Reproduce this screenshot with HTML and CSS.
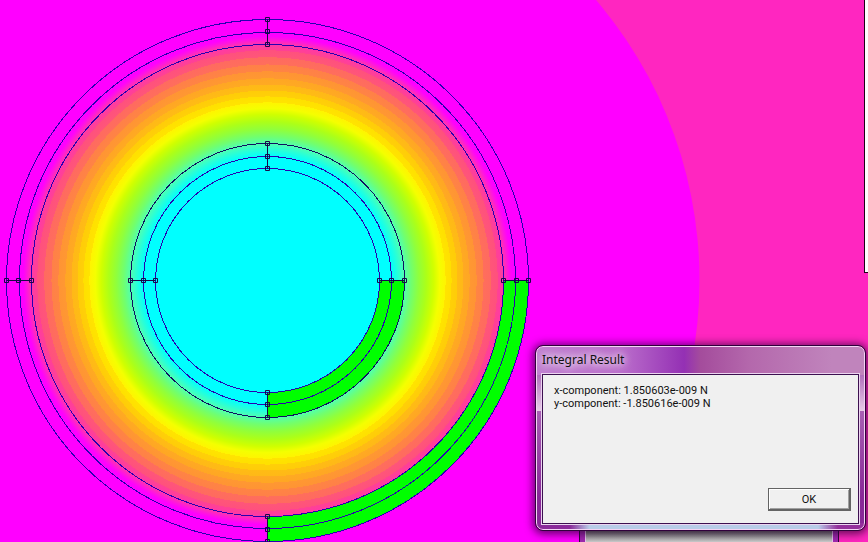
FILE: index.html
```html
<!DOCTYPE html>
<html lang="en">
<head>
    <meta charset="UTF-8">
    <meta name="viewport" content="width=device-width, initial-scale=1.0">
    <title>Integral Result</title>
    <link rel="stylesheet" href="styles.css">
</head>
<body>
    <main class="desktop">
        <svg class="plot" role="img" aria-label="Field density plot">
            <defs>
                <radialGradient id="field" gradientUnits="userSpaceOnUse" cx="0" cy="0" r="248">
                    <stop offset="0.500" stop-color="#00ffff"/>
                    <stop offset="0.522" stop-color="#20ffe0"/>
                    <stop offset="0.552" stop-color="#50ffb0"/>
                    <stop offset="0.580" stop-color="#70ff70"/>
                    <stop offset="0.610" stop-color="#90ff3c"/>
                    <stop offset="0.640" stop-color="#acff18"/>
                    <stop offset="0.670" stop-color="#d0ff00"/>
                    <stop offset="0.694" stop-color="#f4ff00"/>
                    <stop offset="0.718" stop-color="#fff400"/>
                    <stop offset="0.718" stop-color="#ffe400"/>
                    <stop offset="0.742" stop-color="#ffe000"/>
                    <stop offset="0.742" stop-color="#ffd008"/>
                    <stop offset="0.766" stop-color="#ffcc08"/>
                    <stop offset="0.766" stop-color="#ffbc14"/>
                    <stop offset="0.790" stop-color="#ffb818"/>
                    <stop offset="0.790" stop-color="#ffaa22"/>
                    <stop offset="0.815" stop-color="#ffa624"/>
                    <stop offset="0.815" stop-color="#ff9832"/>
                    <stop offset="0.843" stop-color="#ff9434"/>
                    <stop offset="0.843" stop-color="#ff8444"/>
                    <stop offset="0.871" stop-color="#ff8048"/>
                    <stop offset="0.871" stop-color="#ff6e5c"/>
                    <stop offset="0.900" stop-color="#ff6a60"/>
                    <stop offset="0.900" stop-color="#ff5678"/>
                    <stop offset="0.928" stop-color="#ff507e"/>
                    <stop offset="0.928" stop-color="#ff4292"/>
                    <stop offset="0.952" stop-color="#ff38a8"/>
                    <stop offset="0.970" stop-color="#ff18dc"/>
                    <stop offset="0.985" stop-color="#ff00ff"/>
                </radialGradient>
            </defs>
            <g transform="translate(267.5 280.5)">
                <circle r="432" fill="#ff00ff"/>
                <circle r="248" fill="url(#field)"/>

                <!-- selected blocks -->
                <path class="block" d="M236 0H261A261 261 0 0 1 0 261V236A236 236 0 0 0 236 0Z"/>
                <path class="block" d="M112 0H137A137 137 0 0 1 0 137V112A112 112 0 0 0 112 0Z"/>

                <g class="arcs">
                    <circle r="261"/>
                    <circle r="248"/>
                    <circle r="236"/>
                    <circle class="dark" r="137"/>
                    <circle r="124"/>
                    <circle r="112"/>
                </g>

                <g class="nodes">
                    <g id="spoke">
                        <path d="M112 0H137M236 0H261"/>
                        <path d="M110 -2h4v4h-4zM122 -2h4v4h-4zM135 -2h4v4h-4zM234 -2h4v4h-4zM247 -2h4v4h-4zM259 -2h4v4h-4z"/>
                    </g>
                    <use href="#spoke" transform="rotate(90)"/>
                    <use href="#spoke" transform="rotate(180)"/>
                    <use href="#spoke" transform="rotate(270)"/>
                </g>
            </g>
        </svg>

        <div class="side-window"></div>
        <div class="back-window"></div>

        <section class="dialog" role="dialog" aria-labelledby="dialog-title">
            <h1 class="dialog-title" id="dialog-title">Integral Result</h1>
            <div class="dialog-body">
                <div class="result">
                    <p>x-component: 1.850603e-009 N</p>
                    <p>y-component: -1.850616e-009 N</p>
                </div>
                <button type="button" class="ok-button">OK</button>
            </div>
        </section>
    </main>
</body>
</html>
```

FILE: styles.css
```css
* {
    box-sizing: border-box;
}

body {
    margin: 0;
    font-family: Roboto, Tahoma, sans-serif;
    color: #111;
}

.desktop {
    position: relative;
    height: 100vh;
    overflow: hidden;
    background: #ff26c0;
}

.plot {
    display: block;
    width: 100%;
    height: 100%;
}

.block {
    fill: #00ff00;
}

.arcs {
    fill: none;
    stroke: #2800b0;
    shape-rendering: crispEdges;
}

.arcs .dark {
    stroke: #101060;
}

.nodes {
    fill: none;
    stroke: #180848;
}

.side-window {
    position: absolute;
    top: -2px;
    right: -2px;
    width: 6px;
    height: 275px;
    background: #fff;
    border: 1px solid #200018;
}

.back-window {
    position: absolute;
    left: 579px;
    top: 520px;
    width: 260px;
    height: 40px;
    background: linear-gradient(#666 10px, #ddd 24px);
    border: 1px solid #30063c;
    border-width: 0 1px;
    box-shadow: inset 5px 0 #a028b0, inset -5px 0 #a028b0, inset 6px 0 #eac8f0, inset -6px 0 #eac8f0;
}

.dialog {
    position: absolute;
    left: 536px;
    top: 346px;
    width: 329px;
    height: 184px;
    display: flex;
    flex-direction: column;
    padding: 0 5px 5px;
    border: 1px solid #f4d4f4;
    border-radius: 7px;
    outline: 1px solid #30003c;
    background:
        linear-gradient(90deg, #8a2a9a 10%, #b8cce8 16% 86%, #94309c 92%) bottom / 100% 6px no-repeat,
        linear-gradient(transparent 28px, #b070bc 28px, #e8cce8 64px, #a860b4 64px, #882898 150px),
        linear-gradient(90deg, #c080d0 0, #bc70cc 25%, #9430b4 45%, #a44c9c 50%, #b468ac 65%, #c084bc 90%);
    box-shadow: 0 1px 9px 3px rgba(30, 0, 40, 0.7);
}

.dialog-title {
    flex: none;
    height: 27px;
    margin: 0;
    font-family: "Noto Sans", "Segoe UI", sans-serif;
    font-size: 12px;
    line-height: 26px;
    font-weight: 400;
    text-shadow: 0 0 8px #fff, 0 0 8px #fff;
}

.dialog-body {
    flex: 1;
    display: flex;
    flex-direction: column;
    justify-content: space-between;
    padding: 9px 7px 12px 11px;
    border: 1px solid #3c1050;
    outline: 1px solid #ecd4f0;
    background: #f0f0f0;
}

.result p {
    margin: 0;
    font-size: 11px;
    line-height: 13px;
}

.ok-button {
    align-self: flex-end;
    width: 83px;
    height: 23px;
    padding: 0;
    border: 1px solid #646464;
    border-right-width: 2px;
    border-bottom-width: 2px;
    background: #f0f0f0;
    box-shadow: inset 1px 1px #fff, inset -1px -1px #a0a0a0;
    color: #111;
    font: inherit;
    font-size: 11px;
}
```
